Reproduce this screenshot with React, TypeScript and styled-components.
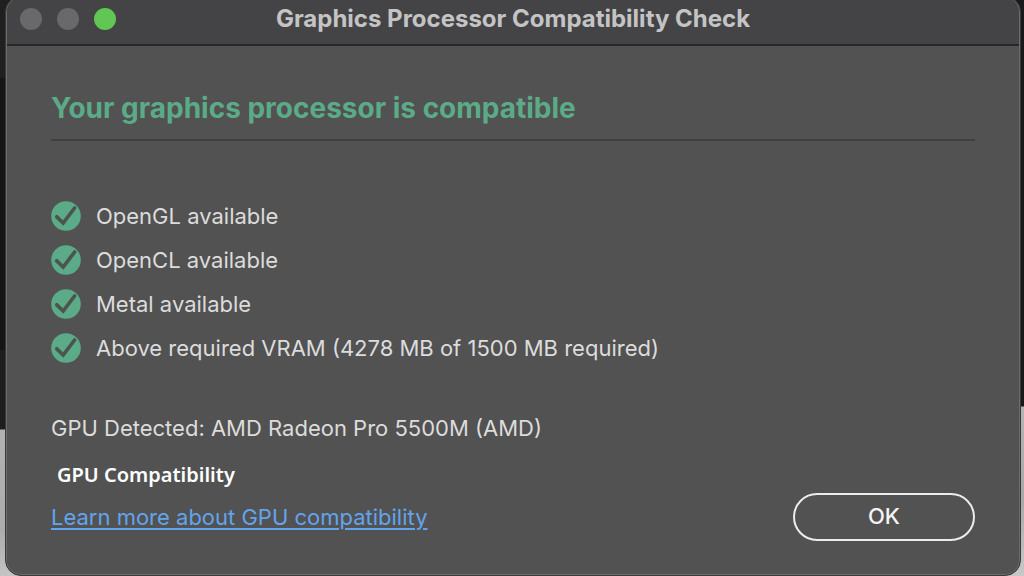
import React from "react";
import styled, { createGlobalStyle } from "styled-components";

const GlobalStyle = createGlobalStyle`
  *, *::before, *::after { box-sizing: border-box; }
  body {
    margin: 0;
    background: #1b1b1c;
    font-family: Inter, "Liberation Sans", sans-serif;
  }
`;

const Desktop = styled.main`
  display: flex;
  min-height: 100vh;
  padding: 0 3px 0 5px;
  overflow: hidden;
  background:
    linear-gradient(#202021 0 78px, #151516 78px 350px, #1e1e1f 350px 429px, #b2b2b3 430px, #acacad 530px, #c4c4c4 576px) left / 50% 100% no-repeat,
    linear-gradient(#19191a 0 406px, #b4b4b6 407px, #a8a8aa 500px, #c8c8c8 576px) right / 50% 100% no-repeat;
`;

const Window = styled.section`
  flex: 1;
  display: flex;
  flex-direction: column;
  margin-top: -4px;
  border: 1px solid #3a3a3b;
  border-radius: 16px;
  overflow: hidden;
  background: #525252;
  box-shadow: inset 0 0 0 1px #6c6c6d;
`;

const TitleBar = styled.header`
  display: grid;
  grid-template-columns: 1fr auto 1fr;
  align-items: center;
  height: 49px;
  margin: 0 1px;
  padding: 0 13px 4px;
  border-bottom: 2px solid #272729;
  border-radius: 15px 15px 0 0;
  background: #444446;
`;

const Lights = styled.div`
  display: flex;
  gap: 15px;
`;

const Light = styled.button<{ $color: string }>`
  width: 22px;
  height: 22px;
  padding: 0;
  border: 0;
  border-radius: 50%;
  background: ${(p) => p.$color};
`;

const Title = styled.h1`
  margin: 0;
  color: #c4c4c5;
  font-size: 24px;
  font-weight: 700;
  line-height: 30px;
`;

const Content = styled.div`
  padding: 44px 45px 34px;
`;

const Heading = styled.h2`
  margin: 0 0 44px;
  padding-bottom: 13px;
  border-bottom: 2px solid #404040;
  color: #5bab88;
  font-size: 28px;
  font-weight: 700;
  line-height: 36px;
`;

const Checks = styled.ul`
  display: flex;
  flex-direction: column;
  margin: 0 0 44px;
  padding: 9px 0 0;
  list-style: none;
`;

const Check = styled.li`
  display: flex;
  align-items: center;
  gap: 15px;
  height: 44px;
  color: #dcdcdc;
  font-size: 22px;
  line-height: 28px;
`;

const Detected = styled.p`
  margin: 0;
  color: #dcdcdc;
  font-size: 22px;
  line-height: 28px;
`;

const Subheading = styled.h3`
  margin: 20px 0 0;
  padding-left: 6px;
  color: #ffffff;
  font-family: "Noto Sans", "Open Sans", sans-serif;
  font-size: 20px;
  font-weight: 600;
  line-height: 26px;
`;

const Footer = styled.footer`
  display: flex;
  justify-content: space-between;
  align-items: center;
  height: 48px;
  margin-top: 5px;
`;

const Link = styled.a`
  color: #62a4ec;
  font-size: 22px;
  line-height: 28px;
  text-decoration-thickness: 2px;
  text-underline-offset: 3px;
`;

const OkButton = styled.button`
  width: 182px;
  height: 48px;
  padding: 0 0 2px;
  border: 2px solid #ececec;
  border-radius: 24px;
  background: transparent;
  color: #f4f4f4;
  font-family: inherit;
  font-size: 22px;
  font-weight: 500;
`;

const CheckIcon = () => (
  <svg width="30" height="30" viewBox="0 0 30 30" aria-hidden="true">
    <circle cx="15" cy="15" r="14.8" fill="#5bab88" />
    <path d="M5.8 15.8 12.2 22 23.6 7" fill="none" stroke="#4d5450" strokeWidth="3.7" strokeLinecap="round" strokeLinejoin="miter" />
  </svg>
);

const lights = [
  { label: "Close", color: "#69696b" },
  { label: "Minimize", color: "#69696b" },
  { label: "Zoom", color: "#62c655" },
];

const checks = [
  "OpenGL available",
  "OpenCL available",
  "Metal available",
  "Above required VRAM (4278 MB of 1500 MB required)",
];

export default function App() {
  return (
    <>
      <GlobalStyle />
      <Desktop>
        <Window>
          <TitleBar>
            <Lights>
              {lights.map((l) => (
                <Light key={l.label} type="button" aria-label={l.label} $color={l.color} />
              ))}
            </Lights>
            <Title>Graphics Processor Compatibility Check</Title>
          </TitleBar>
          <Content>
            <Heading>Your graphics processor is compatible</Heading>
            <Checks>
              {checks.map((text) => (
                <Check key={text}>
                  <CheckIcon />
                  {text}
                </Check>
              ))}
            </Checks>
            <Detected>GPU Detected: AMD Radeon Pro 5500M (AMD)</Detected>
            <Subheading>GPU Compatibility</Subheading>
            <Footer>
              <Link href="#gpu-compatibility">Learn more about GPU compatibility</Link>
              <OkButton type="button">OK</OkButton>
            </Footer>
          </Content>
        </Window>
      </Desktop>
    </>
  );
}
